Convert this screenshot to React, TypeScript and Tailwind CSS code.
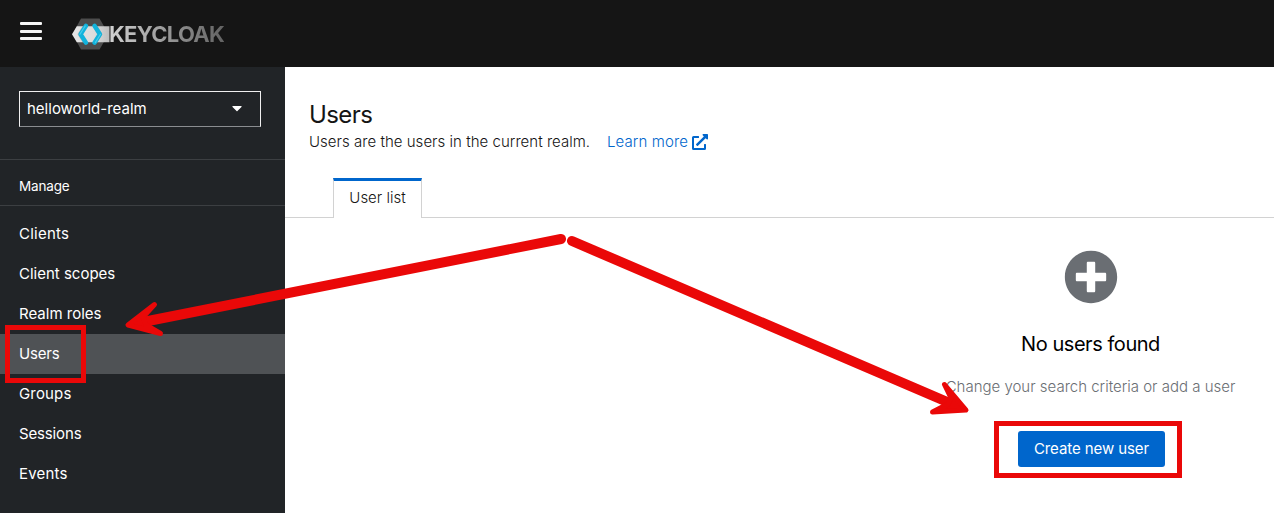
import React from "react";
import { FaCaretDown, FaExternalLinkAlt, FaPlusCircle } from "react-icons/fa";

const navItems = [
  { label: "Clients", tracking: "tracking-[0.25px]" },
  { label: "Client scopes", tracking: "tracking-normal" },
  { label: "Realm roles", tracking: "tracking-normal" },
  { label: "Users", tracking: "tracking-[-0.2px]" },
  { label: "Groups", tracking: "tracking-[0.15px]" },
  { label: "Sessions", tracking: "tracking-[-0.15px]" },
  { label: "Events", tracking: "tracking-[0.2px]" },
];

function Logo() {
  return (
    <div className="flex items-center">
      <svg width="38" height="32" viewBox="0 0 38 32" className="shrink-0" aria-hidden="true">
        <defs>
          <linearGradient id="bar" x1="0" x2="1" y1="0" y2="0">
            <stop offset="0" stopColor="#e6e6e6" />
            <stop offset="0.6" stopColor="#dcdcdc" />
            <stop offset="1" stopColor="#bdbdbd" />
          </linearGradient>
        </defs>
        <path d="M9 0.5H27.5L36.5 16L27.5 31.5H9L0.5 16Z" fill="#4d4d4d" />
        <path d="M4.8 8.3H37.5V24.3H4.8L0 16.2Z" fill="url(#bar)" />
        <path d="M10.500 8.300L5.500 16.300L10.500 24.300H15L10 16.300L15 8.300ZM25.500 8.300L30.500 16.300L25.500 24.300H21L26 16.300L21 8.300Z" fill="#4d4d4d" fillOpacity="0.25" />
        <path d="M14 7.800L8.600 16.300L14 24.700" fill="none" stroke="#12b3dc" strokeWidth="4.400" strokeLinecap="round" strokeLinejoin="round" />
        <path d="M22.500 7.800L27.900 16.300L22.500 24.700" fill="none" stroke="#12b3dc" strokeWidth="4.400" strokeLinecap="round" strokeLinejoin="round" />
        <path d="M13.200 8L7.900 16.300" fill="none" stroke="#48cdeb" strokeWidth="1.200" strokeLinecap="round" />
        <path d="M28.500 16.300L23.400 24.500" fill="none" stroke="#48cdeb" strokeWidth="1.200" strokeLinecap="round" />
      </svg>
      <span className="-ml-px bg-gradient-to-r from-[#d2d2d2] to-[#636363] bg-clip-text text-[22px] leading-8 font-bold tracking-[-0.7px] text-transparent">
        KEYCLOAK
      </span>
    </div>
  );
}

function Header() {
  return (
    <header className="flex h-[67px] shrink-0 items-center bg-[#151515] pl-5">
      <button aria-label="Menu" className="flex w-[22px] flex-col gap-[4.5px] pb-[5px]">
        <span className="h-[3px] rounded-[1px] bg-[#f5f5f5]" />
        <span className="h-[3px] rounded-[1px] bg-[#f5f5f5]" />
        <span className="h-[3px] rounded-[1px] bg-[#f5f5f5]" />
      </button>
      <div className="ml-[30px]">
        <Logo />
      </div>
    </header>
  );
}

function Sidebar() {
  return (
    <aside className="w-[285px] shrink-0 bg-[#212427] text-[15px] text-white">
      <div className="h-[93px] border-b border-[#3c3f42] px-[19px] pt-6">
        <button className="flex h-9 w-[242px] items-center justify-between border border-[#f0f0f0] border-b-[#8a8d90] pr-[15px] pl-[7px]">
          <span>helloworld-realm</span>
          <FaCaretDown size={16} className="relative top-[-1px]" />
        </button>
      </div>
      <h2 className="flex h-[46px] items-center border-b border-[#3c3f42] pt-2 pl-[19px] text-[13.5px] tracking-[-0.15px]">Manage</h2>
      <nav className="pt-2">
        {navItems.map(({ label, tracking }) => (
          <a
            key={label}
            className={`flex h-10 items-center pl-[19px] ${tracking} ${label === "Users" ? "bg-[#4f5255]" : ""}`}
          >
            {label}
          </a>
        ))}
      </nav>
    </aside>
  );
}

function Content() {
  return (
    <main className="min-w-0 flex-1 overflow-hidden bg-white text-[15px] font-light text-[#151515]">
      <div className="w-[1611px]">
        <div className="h-[111px] pt-8 pl-6">
          <h1 className="text-[24px] leading-[31px] font-normal tracking-[-0.6px]">Users</h1>
          <div className="flex h-6 items-center">
            <span className="w-[282px] whitespace-nowrap tracking-[0.03px]">Users are the users in the current realm.</span>
            <a className="ml-4 flex items-center text-[#0066cc]">
              <span className="w-[85px] whitespace-nowrap tracking-[0.1px]">Learn more</span>
              <FaExternalLinkAlt size={16} />
            </a>
          </div>
        </div>
        <div className="flex h-10">
          <div className="w-12 border-b border-[#d2d2d2]" />
          <div className="flex w-[89px] items-center justify-center border-x border-t-[3px] border-x-[#d2d2d2] border-t-[#0066cc] pb-0.5">
            User list
          </div>
          <div className="flex-1 border-b border-[#d2d2d2]" />
        </div>
        <div className="flex flex-col items-center pt-8">
          <FaPlusCircle size={54} className="text-[#6a6e73]" />
          <h2 className="mt-[25px] text-[20px] leading-[30px] font-normal tracking-[-0.45px] text-black">No users found</h2>
          <p className="mt-4 leading-6 text-[#6a6e73]">Change your search criteria or add a user</p>
          <button className="relative left-[1px] mt-8 h-9 w-[147px] rounded-[3px] bg-[#0066cc] font-normal tracking-[-0.08px] text-white">
            Create new user
          </button>
        </div>
      </div>
    </main>
  );
}

function Annotations() {
  return (
    <>
      <div className="absolute top-[325px] left-[5px] h-[58px] w-[81px] border-[5px] border-[#ea0808]" />
      <div className="absolute top-[421px] left-[994px] h-[57px] w-[188px] border-[5px] border-[#ea0808]" />
      <svg className="pointer-events-none absolute inset-0" width="1274" height="513" viewBox="0 0 1274 513" fill="#ea0808" stroke="#ea0808" strokeLinecap="round" strokeLinejoin="round" aria-hidden="true">
        <path d="M561 239L143 322" strokeWidth="10" fill="none" />
        <path d="M154.500 304.500L128 325L160.500 333.500L146 325L143 317Z" strokeWidth="5" />
        <path d="M572 241L952 404" strokeWidth="10" fill="none" />
        <path d="M944.500 384.500L966 410L932.500 412L948 404L951 398Z" strokeWidth="5" />
      </svg>
    </>
  );
}

export default function App() {
  return (
    <div className="relative flex h-[513px] w-[1274px] flex-col overflow-hidden bg-white font-['Inter','Open_Sans',sans-serif]">
      <Header />
      <div className="flex min-h-0 flex-1">
        <Sidebar />
        <Content />
      </div>
      <Annotations />
    </div>
  );
}
